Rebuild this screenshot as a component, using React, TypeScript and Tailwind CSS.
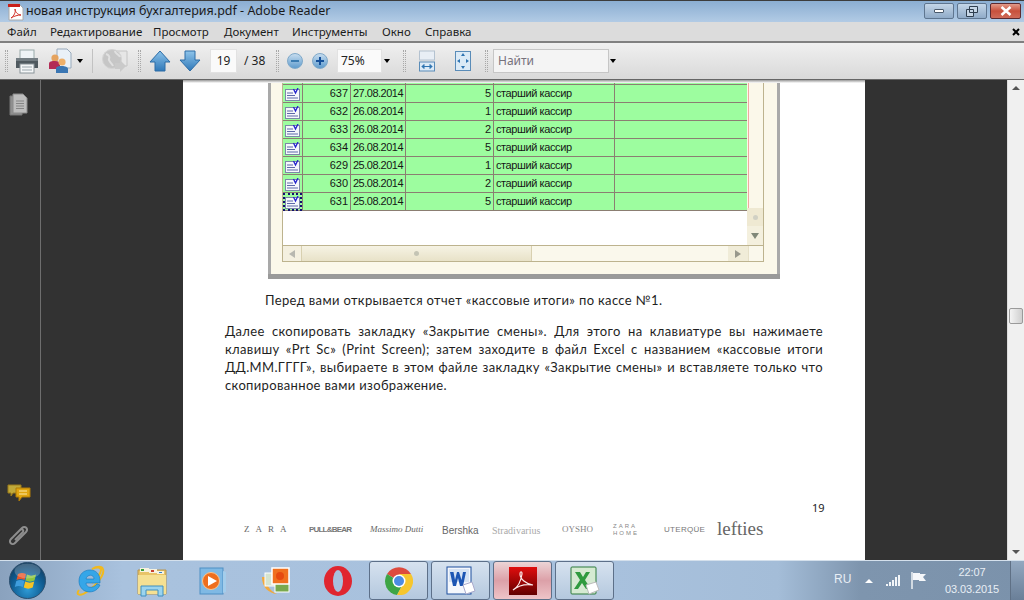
import React from "react";

const ui = { fontFamily: '"Noto Sans", "Open Sans", sans-serif' };
const arial = { fontFamily: '"Liberation Sans", Arial, sans-serif' };
const serif = { fontFamily: '"Liberation Serif", serif' };
const lato = { fontFamily: "Lato, sans-serif" };

const rows = [
  ["637", "27.08.2014", "5"],
  ["632", "26.08.2014", "1"],
  ["633", "26.08.2014", "2"],
  ["634", "26.08.2014", "5"],
  ["629", "25.08.2014", "1"],
  ["630", "25.08.2014", "2"],
  ["631", "25.08.2014", "5"],
];

const menu = [
  ["Файл", "w-[43px]"],
  ["Редактирование", "w-[103px]"],
  ["Просмотр", "w-[71px]"],
  ["Документ", "w-[68px]"],
  ["Инструменты", "w-[90px]"],
  ["Окно", "w-[43px]"],
  ["Справка", "w-[60px]"],
];

const PdfIcon = () => (
  <svg width="18" height="18" viewBox="0 0 18 18">
    <path d="M2 1h10l4 4v12H2z" fill="#fff" stroke="#aaa" />
    <rect x="1" y="1" width="12" height="3" fill="#c8201a" />
    <path d="M4 15c3-2 5-6 4-9 0 3 3 6 6 6-3 0-7 1-10 3z" fill="none" stroke="#d2322a" strokeWidth="1" />
  </svg>
);

const Dots = () => (
  <div className="w-[3px] h-[22px] border-x border-dotted border-[#a8a8a8]" />
);

const Caret = () => (
  <div className="w-0 h-0 border-x-[3.5px] border-x-transparent border-t-[4px] border-t-black" />
);

const Printer = () => (
  <svg width="26" height="26" viewBox="0 0 26 26">
    <rect x="6" y="2" width="14" height="9" fill="#eef3f6" stroke="#9aa" />
    <path d="M2 10h22v10H2z" fill="#4f595f" />
    <path d="M2 10h22v3H2z" fill="#737d83" />
    <rect x="6" y="16" width="14" height="9" fill="#f4f6f7" stroke="#8a9499" />
    <path d="M8 19h10M8 22h10" stroke="#9aa6ad" />
  </svg>
);

const ShareIcon = () => (
  <svg width="24" height="26" viewBox="0 0 24 26">
    <path d="M9 1h10l4 4v15H9z" fill="#eaf1f8" stroke="#9ab" />
    <circle cx="7" cy="10" r="3.6" fill="#e5a35e" />
    <path d="M1 21v-5c0-3 3-3 6-3s5 1 5 3v5z" fill="#b32b55" />
    <circle cx="14" cy="14" r="3.6" fill="#eeb06a" />
    <path d="M8 25v-4c0-3 3-3 6-3s6 1 6 3v4z" fill="#3a76b3" />
  </svg>
);

const DisabledIcon = () => (
  <svg width="28" height="26" viewBox="0 0 28 26">
    <path d="M13 3h13v15H13z" fill="#e6e6e6" stroke="#c4c4c4" />
    <circle cx="11" cy="11" r="9.5" fill="#c6c6c6" stroke="#d4d4d4" />
    <path d="M5 6c3 1 4 3 3 5s3 4 4 7M14 3c0 3 4 3 5 6" stroke="#e0e0e0" strokeWidth="2" fill="none" />
    <path d="M14 15h5v-3l6 6-6 6v-3h-5z" fill="#cacaca" />
  </svg>
);

const ArrowBtn = ({ down }: { down?: boolean }) => (
  <svg width="22" height="24" viewBox="0 0 22 24" className={down ? "rotate-180" : ""}>
    <defs>
      <linearGradient id={down ? "ad" : "au"} x1="0" y1="0" x2="0" y2="1">
        <stop offset="0" stopColor={down ? "#2f78b8" : "#8cc3ea"} />
        <stop offset="1" stopColor={down ? "#8ec4ea" : "#2f78b8"} />
      </linearGradient>
    </defs>
    <path d="M11 2 21 13h-5v9H6v-9H1z" fill={`url(#${down ? "ad" : "au"})`} stroke="#2c6ca6" />
  </svg>
);

const ZoomBtn = ({ plus }: { plus?: boolean }) => (
  <div className="w-[16px] h-[16px] rounded-full bg-gradient-to-b from-[#c6dcee] to-[#5f9ccd] border border-[#7ea8c9] flex items-center justify-center relative">
    <div className={`w-[8px] h-[2px] ${plus ? "bg-[#14509a]" : "bg-[#3a7bb1]"}`} />
    {plus && <div className="absolute w-[2px] h-[8px] bg-[#14509a]" />}
  </div>
);

const FitWidth = () => (
  <svg width="17" height="22" viewBox="0 0 17 22">
    <rect x=".5" y="1" width="15" height="9" fill="#e8eef5" stroke="#b4c2d0" />
    <rect x=".5" y="12" width="15" height="9" fill="#dceaf6" stroke="#5a8cb8" />
    <path d="M3 16.500h10M3 16.500l2-2v4zM13 16.500l-2-2v4z" stroke="#2f74b1" fill="#2f74b1" />
  </svg>
);

const FitPage = () => (
  <svg width="16" height="20" viewBox="0 0 16 20">
    <rect x=".5" y=".5" width="15" height="19" fill="#dbeaf6" stroke="#5a8cb8" />
    <path d="M8 2 6 5h4zM8 18l-2-3h4zM2 10l3-2v4zM14 10l-3-2v4z" fill="#2f74b1" />
  </svg>
);

const RowIcon = ({ focused }: { focused?: boolean }) => (
  <div className={`w-[19px] h-[18px] shrink-0 flex items-center justify-center ${focused ? "outline-2 -outline-offset-2 outline-dotted outline-[#10106e]" : ""}`}>
    <svg width="15" height="13" viewBox="0 0 15 13">
      <rect x=".5" y="1.500" width="14" height="11" fill="#f6f8fc" stroke="#7c88a8" />
      <path d="M2 5h6M2 7.500h8M2 10h11" stroke="#5c68a8" />
      <path d="M8.500 1l2 4 2.500-5" fill="none" stroke="#2222cc" strokeWidth="1.300" />
    </svg>
  </div>
);

const Cell = ({ className, children }: { className: string; children?: React.ReactNode }) => (
  <div className={`shrink-0 h-full border-l border-[#8b7e72] px-[2px] flex items-center ${className}`}>
    {children}
  </div>
);

const Row = ({ r, focused }: { r: string[]; focused?: boolean }) => (
  <div className="flex h-[18px] bg-[#9dfd9f] border-b border-[#8b7e72] text-[11px] text-[#161616]" style={arial}>
    <RowIcon focused={focused} />
    <Cell className="w-[48px] justify-end">{r[0]}</Cell>
    <Cell className="w-[55px] tracking-[-.5px]">{r[1]}</Cell>
    <Cell className="w-[88px] justify-end">{r[2]}</Cell>
    <Cell className="w-[121px] tracking-[-.4px]">старший кассир</Cell>
    <Cell className="w-[132px]" />
  </div>
);

const Brands = () => (
  <div className="flex items-center h-[28px] mt-[1px] pl-[61px] text-[#666]">
    <span className="w-[65px] text-[9px] tracking-[6px]" style={serif}>ZARA</span>
    <span className="w-[61px] text-[8px] font-bold text-[#777] tracking-[-.8px]" style={arial}>PULL&BEAR</span>
    <span className="w-[72px] text-[9px] italic" style={serif}>Massimo Dutti</span>
    <span className="w-[50px] text-[10px]" style={arial}>Bershka</span>
    <span className="w-[70px] text-[10px] text-[#aaa]" style={serif}>Stradivarius</span>
    <span className="w-[51px] text-[9px] text-[#888]" style={serif}>OYSHO</span>
    <span className="w-[51px] text-[6px] leading-[7px] tracking-[2px] text-[#888]" style={arial}>ZARA<br />HOME</span>
    <span className="w-[53px] text-[8px] tracking-[.3px] text-[#777]" style={arial}>UTERQÜE</span>
    <span className="-mt-[4px] text-[19px] leading-none text-[#666]" style={serif}>lefties</span>
  </div>
);

const TaskBtn = ({ active, children }: { active?: boolean; children: React.ReactNode }) => (
  <div className={`w-[59px] h-[39px] mr-[3px] rounded-[3px] border border-[#5d7089] flex items-center justify-center ${active ? "bg-gradient-to-b from-[#ecd4d6] via-[#dca0a8] to-[#eec4c8]" : "bg-gradient-to-b from-[#d6e2ef] to-[#b4c8de]"}`}>
    {children}
  </div>
);

const Slot = ({ children }: { children: React.ReactNode }) => (
  <div className="w-[62px] h-[39px] flex items-center justify-center">{children}</div>
);

const StartOrb = () => (
  <svg width="37" height="37" viewBox="0 0 37 37">
    <defs>
      <radialGradient id="orb" cx=".5" cy=".75" r=".75">
        <stop offset="0" stopColor="#2e9bd6" />
        <stop offset=".6" stopColor="#0f5c92" />
        <stop offset="1" stopColor="#123a5c" />
      </radialGradient>
    </defs>
    <circle cx="18.500" cy="18.500" r="18" fill="url(#orb)" stroke="#2c4f6e" />
    <path d="M9 12c3-1.500 5-1.500 8 0l-1.500 6c-3-1.500-5-1.500-8 0z" fill="#e8582a" />
    <path d="M18 12.500c3 1.500 5 1.500 9 0l-1.500 6c-3 1.500-6 1.500-9 0z" fill="#8ec63f" />
    <path d="M7.300 19c3-1.500 5-1.500 8 0l-1.500 6c-3-1.500-5-1.500-8 0z" fill="#3f9ddd" />
    <path d="M16.200 19.500c3 1.500 6 1.500 9 0l-1.500 6c-3 1.500-6 1.500-9 0z" fill="#f7c325" />
    <ellipse cx="18.500" cy="9" rx="13" ry="7.500" fill="#fff" opacity=".22" />
  </svg>
);

const IEIcon = () => (
  <svg width="32" height="32" viewBox="0 0 32 32">
    <path d="M5 25C1 30 6 32 14 26 23 20 31 9 29 4c-1-3-6-3-11 0 5-2 9-2 9 1 0 3-4 9-9 13" fill="none" stroke="#f1b91e" strokeWidth="2" />
    <path d="M5 16c0-7 5-11 11-11s10 4 10 11v2H12c0 5 7 6 11 1l3 1c-3 7-10 8-15 6-4-2-6-6-6-10zm7-2h8c0-5-7-5-8 0z" fill="#35a6e8" stroke="#1478bd" strokeWidth=".6" />
  </svg>
);

const FolderIcon = () => (
  <svg width="32" height="32" viewBox="0 0 32 32">
    <path d="M2 5h28v24H2z" fill="#e8c468" stroke="#b8954c" />
    <path d="M4 3h9v4H4zM13 4h8v4h-8zM21 6h7v3h-7z" fill="#f7f2df" />
    <path d="M5 4h3v2H5z" fill="#3aa03a" />
    <path d="M15 5h3v2h-3z" fill="#c8402f" />
    <path d="M23 7h3v1h-3z" fill="#2f7fc8" />
    <path d="M2 10h28v19H2z" fill="#f5e092" />
    <path d="M5 31V21h22v10h-5v-6H10v6z" fill="#9bd4ee" stroke="#3f8fc0" />
  </svg>
);

const WmpIcon = () => (
  <svg width="30" height="30" viewBox="0 0 30 30">
    <rect x="1" y="2" width="23" height="26" fill="#7fb9e4" stroke="#4f8fc4" />
    <path d="M24 5l3 1v20l-3 1z" fill="#a4cdeb" />
    <circle cx="12" cy="15" r="8.500" fill="#ee6e1e" stroke="#fbc58c" />
    <path d="M9 10l9 5-9 5z" fill="#fff" />
  </svg>
);

const PhotoIcon = () => (
  <svg width="32" height="32" viewBox="0 0 32 32">
    <path d="M2 12c0 10 6 16 15 17-7-3-11-9-11-17z" fill="#f2a93c" />
    <rect x="5" y="8" width="13" height="13" fill="#d5e4d0" stroke="#fff" />
    <rect x="15" y="15" width="14" height="12" fill="#79a94e" stroke="#fff" />
    <rect x="12" y="3" width="17" height="16" fill="#f0701f" stroke="#fff" strokeWidth="1.500" />
    <circle cx="20" cy="11" r="4" fill="#e64a10" />
  </svg>
);

const OperaIcon = () => (
  <svg width="28" height="32" viewBox="0 0 28 32">
    <ellipse cx="14" cy="16" rx="14" ry="15" fill="#e0262f" />
    <ellipse cx="14" cy="16" rx="5" ry="11" fill="#a8c1dd" />
  </svg>
);

const ChromeIcon = () => (
  <svg width="28" height="28" viewBox="0 0 28 28">
    <path d="M14 14 2 7a14 14 0 0 1 24 0z" fill="#dd4b3e" />
    <path d="M2 7a14 14 0 0 0 10 21l6-11z" fill="#3da545" />
    <path d="M26 7a14 14 0 0 1-14 21l6-11-4-10z" fill="#f6c62e" />
    <circle cx="14" cy="14" r="6.500" fill="#fff" />
    <circle cx="14" cy="14" r="5" fill="#4c8ce2" />
  </svg>
);

const WordIcon = () => (
  <svg width="30" height="30" viewBox="0 0 30 30">
    <rect x="1" y="1" width="24" height="27" fill="#f4f7fc" stroke="#1d4f9e" />
    <path d="M3 3h20v13H3z" fill="#2f71c8" opacity=".15" />
    <path d="M4 6l3 14h3l2-8 2 8h3l3-14h-3l-1.500 8L13 6h-2l-2 8-1.500-8z" fill="#1d56b4" />
    <path d="M17 19l9-3 3 9-9 3z" fill="#fff" stroke="#aac" />
  </svg>
);

const AcrobatIcon = () => (
  <svg width="28" height="28" viewBox="0 0 28 28">
    <defs>
      <linearGradient id="acro" x1="0" y1="0" x2="0" y2="1">
        <stop offset="0" stopColor="#e00d0d" />
        <stop offset="1" stopColor="#620000" />
      </linearGradient>
    </defs>
    <rect width="28" height="28" fill="url(#acro)" />
    <path d="M4 23c5-3 8-9 9-16 0-3-2-3-2 0 0 5 6 10 13 11-6-1-14 0-20 5z" fill="none" stroke="#fbeaea" strokeWidth="1.200" />
  </svg>
);

const ExcelIcon = () => (
  <svg width="30" height="30" viewBox="0 0 30 30">
    <rect x="1" y="1" width="25" height="27" rx="1" fill="#d5ead2" stroke="#2d7a3c" />
    <path d="M5 6h5l3 5 3-5h4l-5 8 6 9h-5l-4-6-4 6H4l6-9z" fill="#2f9b3f" />
    <path d="M16 19l10-3 3 8-10 4z" fill="#fff" stroke="#bbb" />
  </svg>
);

export default function App() {
  return (
    <div className="w-[1024px] h-[600px] flex flex-col overflow-hidden bg-[#323232]" style={ui}>
      {/* title bar */}
      <div className="h-[22px] shrink-0 border-t border-[#3c3c3c] bg-gradient-to-b from-[#8baed2] to-[#b2cbe5] flex items-center pl-[7px] pr-[3px]">
        <PdfIcon />
        <span className="ml-[1px] text-[12.500px] text-[#1a1a1a]">новая инструкция бухгалтерия.pdf - Adobe Reader</span>
        <div className="ml-auto flex gap-[3px] self-start mt-[2px]">
          <div className="w-[30px] h-[16px] rounded-[2px] border border-[#5f7690] bg-gradient-to-b from-[#c4d6e8] to-[#90abc8] flex items-center justify-center">
            <div className="w-[10px] h-[4px] bg-white border border-[#4a5a6c] rounded-[1px]" />
          </div>
          <div className="w-[30px] h-[16px] rounded-[2px] border border-[#5f7690] bg-gradient-to-b from-[#c4d6e8] to-[#90abc8] flex items-center justify-center">
            <svg width="12" height="11" viewBox="0 0 12 11">
              <path d="M3.500.500h8v6h-8zM.500 3.500h7v7h-7z" fill="#c6d6e6" stroke="#2f3f50" />
            </svg>
          </div>
          <div className="w-[31px] h-[16px] rounded-[2px] border border-[#5c2a30] bg-gradient-to-b from-[#e09a8a] via-[#c8503c] to-[#cf6a58] flex items-center justify-center">
            <svg width="12" height="10" viewBox="0 0 12 10">
              <path d="M1.500 1l9 8M10.500 1l-9 8" stroke="#fff" strokeWidth="2.500" />
            </svg>
          </div>
        </div>
      </div>

      {/* menu bar */}
      <div className="h-[19px] shrink-0 bg-[#dcdcdc] flex items-center pl-[7px] pr-[4px] text-[11.500px] text-[#1c1c1c]">
        {menu.map(([label, w]) => (
          <span key={label} className={w}>{label}</span>
        ))}
        <svg className="ml-auto" width="8" height="8" viewBox="0 0 8 8">
          <path d="M1 1l6 6M7 1 1 7" stroke="#000" strokeWidth="2" />
        </svg>
      </div>

      {/* toolbar */}
      <div className="h-[39px] shrink-0 border-t-2 border-b border-t-[#808080] border-b-[#666] bg-gradient-to-b from-[#f0f0f0] to-[#d9d9d9] flex items-center pl-[5px] text-[12px] text-[#222]">
        <Dots />
        <div className="ml-[6px]"><Printer /></div>
        <div className="ml-[8px]"><ShareIcon /></div>
        <div className="ml-[5px]"><Caret /></div>
        <div className="ml-[9px] w-px h-[24px] bg-[#c2c2c2]" />
        <div className="ml-[8px]"><DisabledIcon /></div>
        <div className="ml-[9px]"><Dots /></div>
        <div className="ml-[8px]"><ArrowBtn /></div>
        <div className="ml-[8px]"><ArrowBtn down /></div>
        <div className="ml-[9px] w-[27px] h-[24px] bg-[#fafafa] border border-[#e2e2e2] flex items-center justify-center">19</div>
        <span className="ml-[7px] w-[22px] whitespace-nowrap">/ 38</span>
        <div className="ml-[10px]"><Dots /></div>
        <div className="ml-[8px]"><ZoomBtn /></div>
        <div className="ml-[9px]"><ZoomBtn plus /></div>
        <div className="ml-[9px] w-[45px] h-[24px] bg-[#fafafa] border border-[#e2e2e2] flex items-center pl-[3px]">75%</div>
        <div className="ml-[2px]"><Caret /></div>
        <div className="ml-[13px]"><Dots /></div>
        <div className="ml-[13px]"><FitWidth /></div>
        <div className="ml-[19px]"><FitPage /></div>
        <div className="ml-[14px]"><Dots /></div>
        <div className="ml-[5px] w-[116px] h-[24px] bg-[#f4f4f4] border border-[#c6c6c6] flex items-center pl-[4px] text-[#77727c]">Найти</div>
        <div className="ml-[1px]"><Caret /></div>
      </div>

      {/* body */}
      <div className="flex-1 min-h-0 flex">
        <div className="w-[41px] shrink-0 border-r border-[#6e6e6e] flex flex-col items-center pt-[13px] pb-[12px] pr-[3px]">
          <svg width="19" height="23" viewBox="0 0 19 23">
            <path d="M1 3h12v19H1z" fill="#8f8f8f" stroke="#777" />
            <path d="M4 1h10l4 4v15H4z" fill="#bdbdbd" stroke="#8a8a8a" />
            <path d="M7 8h8M7 10.500h8M7 13h8M7 15.500h8" stroke="#858585" />
          </svg>
          <div className="mt-auto">
            <svg width="24" height="18" viewBox="0 0 24 18">
              <path d="M1 1h13v8H6l-2 3V9H1z" fill="#c0a93a" stroke="#9a7a18" />
              <path d="M9 4h14v9h-8l-3 4v-4H9z" fill="#e0a50f" stroke="#ae7a08" />
              <path d="M12 7h8M12 10h8" stroke="#fbe9a8" />
            </svg>
          </div>
          <div className="mt-[22px]">
            <svg width="22" height="24" viewBox="0 0 22 24">
              <path d="M5 13l9-9c3-3 7 1 4 4L7 19c-3 3-7-1-4-4l9-9c2-2 4 0 3 2l-8 8" fill="none" stroke="#8e8e8e" strokeWidth="2" />
            </svg>
          </div>
        </div>

        <div className="w-[142px] shrink-0" />

        {/* page */}
        <div className="w-[682px] shrink-0 bg-white flex flex-col">
          <div className="h-[3px] bg-gradient-to-b from-[#9a9a9a] to-white -mb-[3px] relative z-10" />
          <div className="ml-[85px] w-[512px] h-[194px] shrink-0 bg-[#fbf8ea] border-x-[3px] border-[#a9a9a9] shadow-[0_5px_0_#9a9a9a] overflow-hidden">
            <div className="ml-[11px] w-[482px] h-[182px] flex flex-col bg-white border-x border-b border-[#bdb38e]">
              <div className="flex-1 min-h-0 flex">
                <div className="w-[464px] shrink-0 flex flex-col">
                  <div className="h-[5px] shrink-0 overflow-hidden flex flex-col justify-end bg-[#9dfd9f] border-b border-[#8b7e72] text-[11px] text-[#161616]" style={arial}>
                    <div className="flex h-[18px] shrink-0">
                      <div className="w-[19px] shrink-0" />
                      <Cell className="w-[48px]" />
                      <Cell className="w-[55px]" />
                      <Cell className="w-[88px]" />
                      <Cell className="w-[121px] tracking-[-.4px]">старший кассир</Cell>
                      <Cell className="w-[132px]" />
                    </div>
                  </div>
                  {rows.map((r, i) => (
                    <Row key={r[0]} r={r} focused={i === rows.length - 1} />
                  ))}
                  <div className="flex-1 bg-white" />
                </div>
                <div className="flex-1 flex flex-col bg-[#fbf8ea]">
                  <div className="h-[130px] w-px ml-[1px] bg-[#f0a8a0]" />
                  <div className="mt-auto h-[18px] bg-[#efe9d2] flex items-center justify-center">
                    <div className="w-[5px] h-[5px] rounded-full bg-[#d0d0c4]" />
                  </div>
                  <div className="h-[19px] flex items-center justify-center bg-[#f4f0de]">
                    <div className="w-0 h-0 border-x-[4px] border-x-transparent border-t-[6px] border-t-[#808878]" />
                  </div>
                </div>
              </div>
              <div className="h-[16px] shrink-0 flex border-t border-[#bdb38e] bg-[#faf8ec]">
                <div className="w-[19px] border-r border-[#d8d0b0] flex items-center justify-center bg-[#f4f0e0]">
                  <div className="w-0 h-0 border-y-[4px] border-y-transparent border-r-[6px] border-r-[#b8b8b0]" />
                </div>
                <div className="w-[230px] flex items-center justify-center border-r border-[#d8d0b0] bg-gradient-to-b from-[#f6f3e4] to-[#e8e2c8]">
                  <div className="w-[5px] h-[5px] rounded-full bg-[#c4c4b4]" />
                </div>
                <div className="flex-1" />
                <div className="w-[20px] bg-[#f0ecd8] flex items-center justify-center">
                  <div className="w-0 h-0 border-y-[4px] border-y-transparent border-l-[6px] border-l-[#98988c]" />
                </div>
                <div className="w-[15px] border-l border-[#e6e0c8]" />
              </div>
            </div>
          </div>

          <p className="mt-[17px] ml-[82px] text-[13px] leading-[18px] text-[#1f1f1f] tracking-[.35px]" style={lato}>
            Перед вами открывается отчет «кассовые итоги» по кассе №1.
          </p>
          <p className="mt-[13px] ml-[42px] w-[598px] text-[13px] leading-[18px] text-[#1f1f1f] text-justify tracking-[.35px]" style={lato}>
            Далее скопировать закладку «Закрытие смены». Для этого на клавиатуре вы нажимаете клавишу «Prt Sc» (Print Screen); затем заходите в файл Excel с названием «кассовые итоги ДД.ММ.ГГГГ», выбираете в этом файле закладку «Закрытие смены» и вставляете только что скопированное вами изображение.
          </p>

          <div className="mt-auto">
            <div className="ml-[629px] text-[11px] leading-[14px] text-[#222]">19</div>
            <Brands />
            <div className="h-[16px]" />
          </div>
        </div>

        <div className="w-[142px] shrink-0" />

        {/* scrollbar */}
        <div className="w-[17px] shrink-0 bg-[#f0f0f0] border-l border-[#dddddd] flex flex-col items-center pt-[6px] pb-[6px]">
          <div className="w-0 h-0 border-x-[4px] border-x-transparent border-b-[4px] border-b-[#555]" />
          <div className="mt-[218px] w-[14px] h-[16px] bg-gradient-to-r from-[#f4f4f4] to-[#cfcfcf] border border-[#9a9a9a] rounded-[2px]" />
          <div className="mt-auto w-0 h-0 border-x-[4px] border-x-transparent border-t-[4px] border-t-[#555]" />
        </div>
      </div>

      {/* taskbar */}
      <div className="h-[40px] shrink-0 border-t border-[#d4e0ec] bg-[linear-gradient(90deg,#8aa2be_0%,#a9c2de_12%,#a8c1dd_60%,#a4bdd8_76%,#7e95ae_84%,#7b92ab_100%)] flex items-center text-[#e8eef5]" style={arial}>
        <div className="w-[55px] flex justify-end pr-[9px]"><StartOrb /></div>
        <div className="ml-[4px] flex">
          <Slot><IEIcon /></Slot>
          <Slot><FolderIcon /></Slot>
          <Slot><WmpIcon /></Slot>
          <Slot><PhotoIcon /></Slot>
          <Slot><OperaIcon /></Slot>
        </div>
        <div className="flex">
          <TaskBtn><ChromeIcon /></TaskBtn>
          <TaskBtn><WordIcon /></TaskBtn>
          <TaskBtn active><AcrobatIcon /></TaskBtn>
          <TaskBtn><ExcelIcon /></TaskBtn>
        </div>
        <span className="ml-[217px] text-[12px] w-[28px] -mt-[4px]">RU</span>
        <div className="ml-[3px] w-0 h-0 border-x-[4px] border-x-transparent border-b-[4px] border-b-white" />
        <svg className="ml-[12px]" width="16" height="13" viewBox="0 0 16 13">
          <path d="M1 10h2v2H1zM4 8h2v4H4zM7 6h2v6H7zM10 3h2v9h-2zM13 1h2v11h-2z" fill="#f2f5f8" />
        </svg>
        <svg className="ml-[10px]" width="16" height="17" viewBox="0 0 16 17">
          <path d="M1 0v17" stroke="#fff" strokeWidth="1.300" />
          <path d="M2 1h7v1h6l-3 3 3 4H8V8H2z" fill="#f5f7fa" />
        </svg>
        <div className="ml-[18px] mt-[1px] w-[54px] text-center text-[11px] tracking-[-.1px] leading-[17px] whitespace-nowrap">
          <div>22:07</div>
          <div>03.03.2015</div>
        </div>
        <div className="ml-auto w-[14px] h-full border-l border-[#5f7085] bg-gradient-to-b from-[#93a8c0] to-[#6a7f98]" />
      </div>
    </div>
  );
}
